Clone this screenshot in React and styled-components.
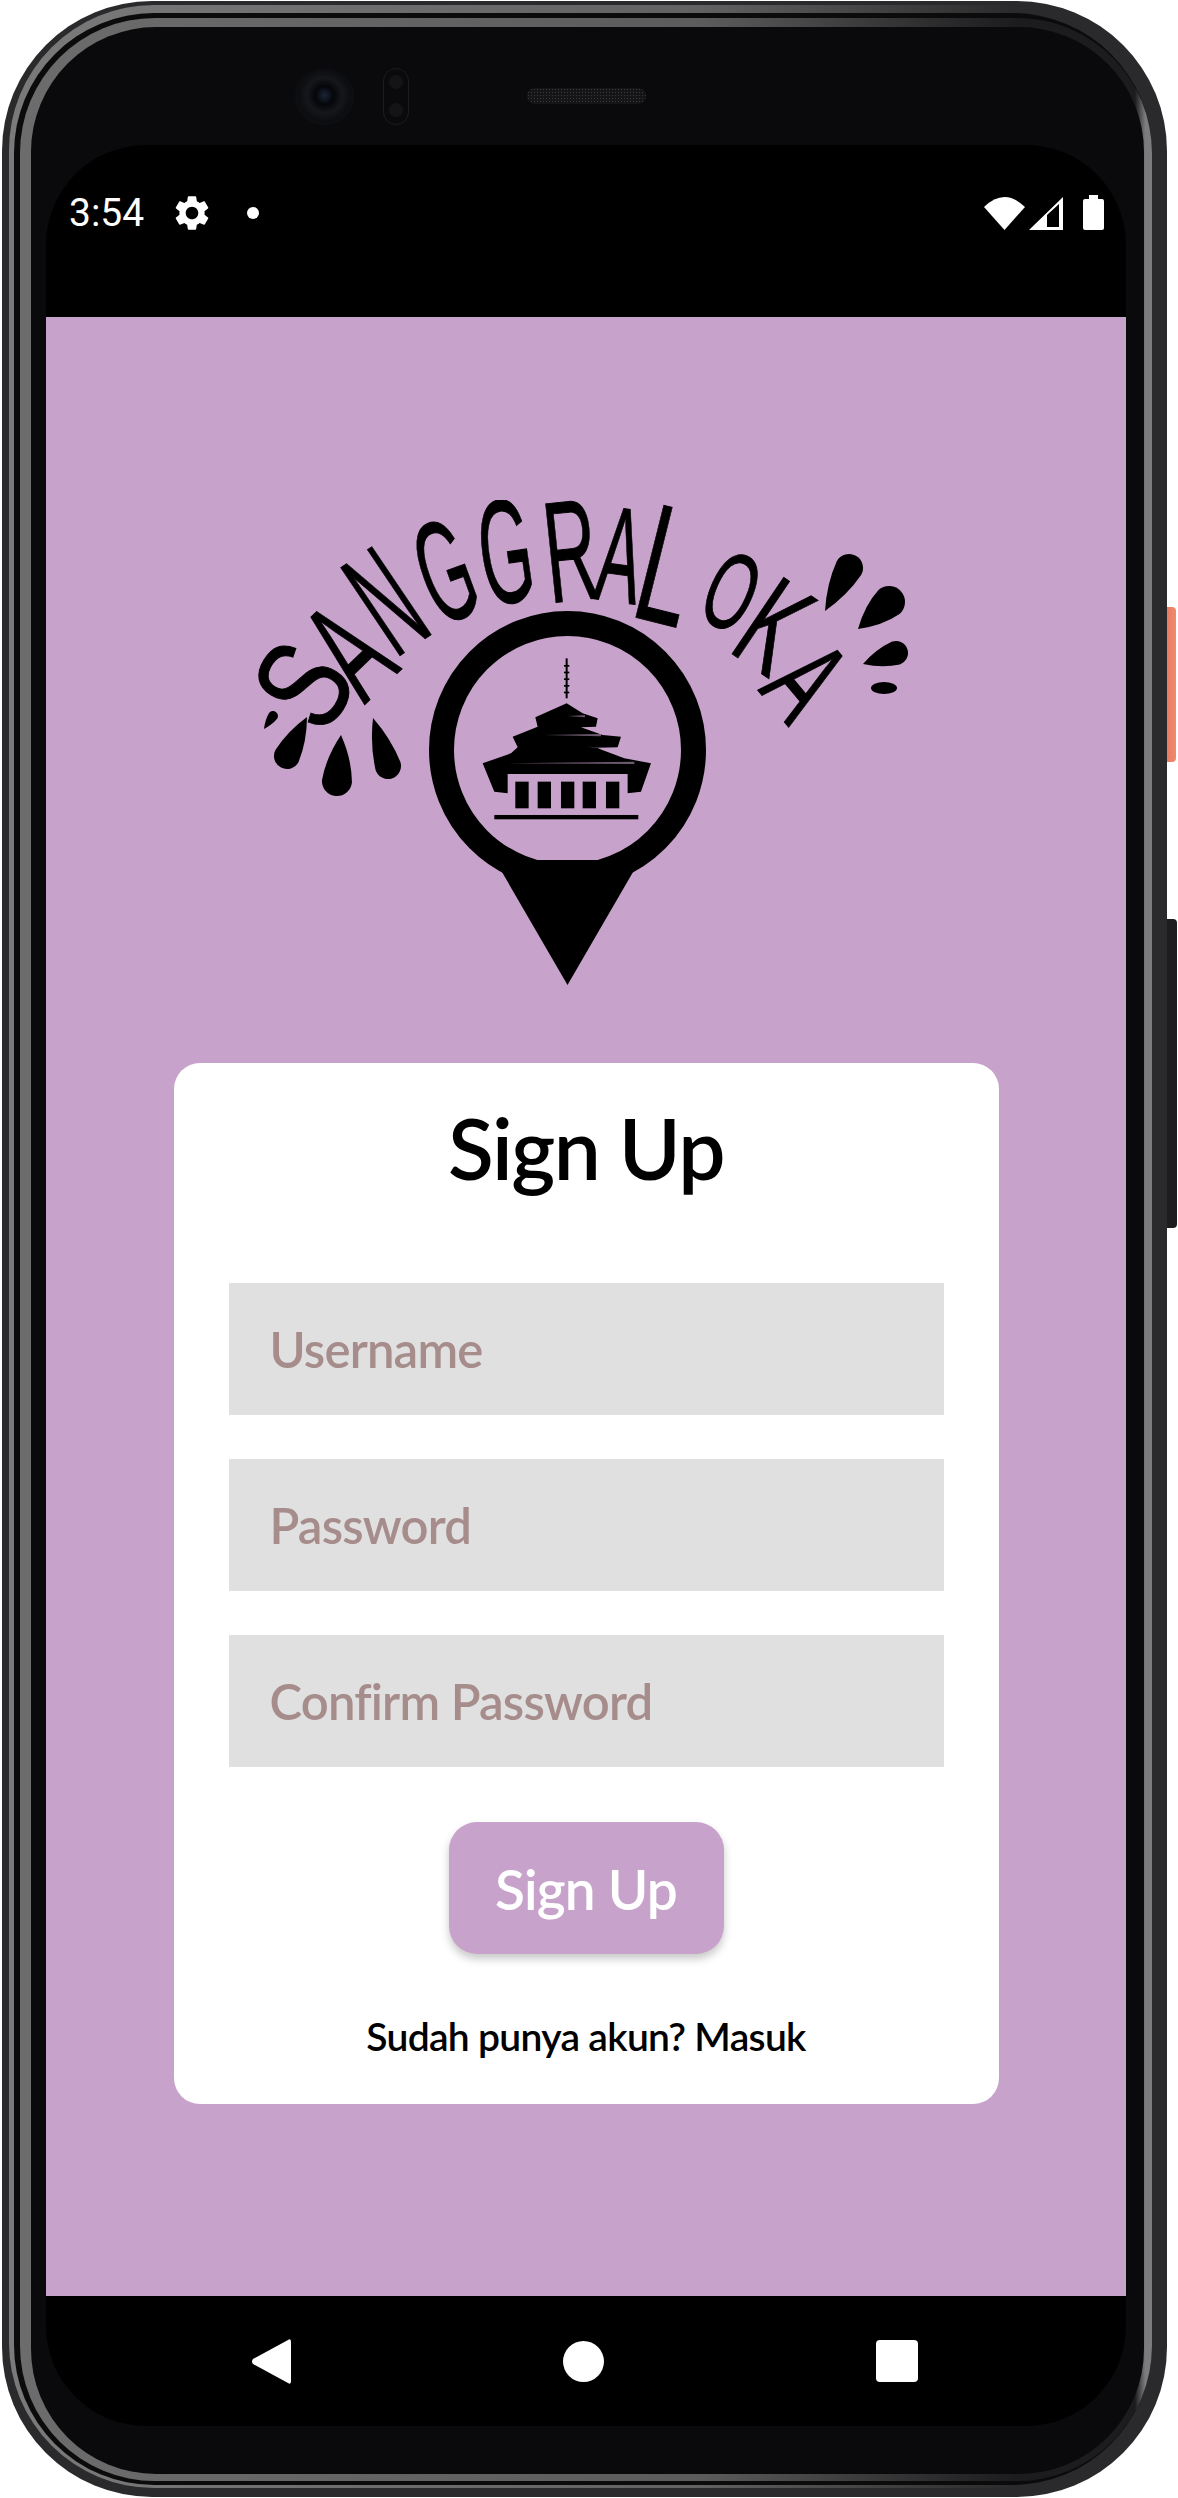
import React from 'react';
import styled, { createGlobalStyle } from 'styled-components';

const GlobalStyle = createGlobalStyle`
  html, body {
    margin: 0;
    padding: 0;
    background: #fff;
  }
  * {
    box-sizing: border-box;
  }
`;

const PURPLE = '#c7a2ca';
const FONT = 'Lato, "Open Sans", sans-serif';

// letters of the logo, placed one by one along the arc
const LOGO_LETTERS = [
  { ch: 'S', x: 304, y: 686, r: -58, sx: 0.76, size: 132 },
  { ch: 'A', x: 349, y: 652, r: -44, sx: 0.54, size: 146 },
  { ch: 'N', x: 386, y: 603, r: -34, sx: 0.44, size: 154 },
  { ch: 'G', x: 445, y: 573, r: -20, sx: 0.46, size: 144 },
  { ch: 'G', x: 505, y: 554, r: -8, sx: 0.46, size: 148 },
  { ch: 'R', x: 570, y: 553, r: -6, sx: 0.5, size: 144 },
  { ch: 'A', x: 619, y: 557, r: 8, sx: 0.48, size: 136 },
  { ch: 'L', x: 666, y: 568, r: 14, sx: 0.56, size: 168 },
  { ch: 'O', x: 730, y: 593, r: 24, sx: 0.56, size: 110 },
  { ch: 'K', x: 772, y: 628, r: 34, sx: 0.58, size: 134 },
  { ch: 'A', x: 804, y: 682, r: 50, sx: 0.58, size: 126 },
];

const DROPS = [
  [824, 611, 848, 568, 14],
  [857, 629, 888, 602, 16],
  [862, 664, 895, 653, 12],
  [263, 729, 272, 716, 5],
  [306, 717, 286, 756, 13],
  [340, 735, 336, 781, 15],
  [372, 718, 387, 766, 13],
];

const WINDOWS = [343, 410, 480, 545, 615];

const dropPath = (tx, ty, hx, hy, r) => {
  const len = Math.hypot(hx - tx, hy - ty);
  const nx = (-(hy - ty) / len) * r;
  const ny = ((hx - tx) / len) * r;
  const mx = tx + (hx - tx) * 0.5;
  const my = ty + (hy - ty) * 0.5;
  return `M${tx} ${ty} Q${mx + nx * 0.85} ${my + ny * 0.85} ${hx + nx} ${hy + ny} A${r} ${r} 0 1 0 ${hx - nx} ${hy - ny} Q${mx - nx * 0.85} ${my - ny * 0.85} ${tx} ${ty}Z`;
};

const Logo = () => (
  <LogoSvg viewBox="250 500 670 500" width="670" height="500">
    {LOGO_LETTERS.map((l, i) => (
      <g key={i} transform={`translate(${l.x} ${l.y}) rotate(${l.r}) scale(${l.sx} 1)`}>
        <LogoLetter fontSize={l.size} y={l.size * 0.33} textAnchor="middle">{l.ch}</LogoLetter>
      </g>
    ))}
    {DROPS.map((d, i) => <path key={i} d={dropPath(...d)} fill="#000" />)}
    <ellipse cx="883" cy="688" rx="13" ry="6" fill="#000" />

    <path d="M494 860 L566.5 985 L639 860Z" fill="#000" />
    <ellipse cx="566.5" cy="750" rx="126" ry="126.5" fill="none" stroke="#000" strokeWidth="25" />

    <g transform="translate(400 600) scale(.3333)">
      <rect x="494" y="175" width="6" height="120" fill="#000" />
      {[195, 215, 235, 255, 275].map(y => <rect key={y} x="489" y={y} width="16" height="5" fill="#000" />)}
      <path
        d="M497 310 L545 340 L590 355 L585 380 L540 382 L605 405 L660 410 L650 442 L590 445 L670 475 L750 490 L720 575 L680 580 L680 522 L320 522 L320 580 L280 575 L245 490 L330 460 L350 442 L335 410 L410 380 L403 352Z"
        fill="#000"
      />
      <path d="M500 348 L552 346 L552 352Z M430 405 L600 402 L600 409Z M555 440 L650 443 L650 448Z M300 490 L700 485 L700 492Z" fill={PURPLE} opacity=".55" />
      {WINDOWS.map(x => <rect key={x} x={x} y="545" width="40" height="80" fill="#000" />)}
      <rect x="280" y="645" width="432" height="13" fill="#000" />
    </g>
  </LogoSvg>
);

const App = () => (
  <Page>
    <GlobalStyle />
    <VolumeKey />
    <PowerKey />
    <Shell>
      <Trim>
        <Groove>
          <Edge>
            <Bezel>
              <TopBezel>
                <Camera />
                <Sensors>
                  <SensorDot />
                  <SensorDot />
                </Sensors>
                <Speaker />
              </TopBezel>
              <Display>
                <StatusBar>
                  <StatusLeft>
                    <Clock>3:54</Clock>
                    <svg width="42" height="42" viewBox="0 0 24 24" fill="#fff">
                      <path d="M19.14 12.94c.04-.3.06-.61.06-.94 0-.32-.02-.64-.07-.94l2.03-1.58c.18-.14.23-.41.12-.61l-1.92-3.32c-.12-.22-.37-.29-.59-.22l-2.39.96c-.5-.38-1.03-.7-1.62-.94l-.36-2.54c-.04-.24-.24-.41-.48-.41h-3.84c-.24 0-.43.17-.47.41l-.36 2.54c-.59.24-1.13.57-1.62.94l-2.39-.96c-.22-.08-.47 0-.59.22L2.74 8.87c-.12.21-.08.47.12.61l2.03 1.58c-.05.3-.09.63-.09.94s.02.64.07.94l-2.03 1.58c-.18.14-.23.41-.12.61l1.92 3.32c.12.22.37.29.59.22l2.39-.96c.5.38 1.03.7 1.62.94l.36 2.54c.05.24.24.41.48.41h3.84c.24 0 .44-.17.47-.41l.36-2.54c.59-.24 1.13-.56 1.62-.94l2.39.96c.22.08.47 0 .59-.22l1.92-3.32c.12-.22.07-.47-.12-.61l-2.01-1.58zM12 15.6c-1.98 0-3.6-1.62-3.6-3.6s1.62-3.6 3.6-3.6 3.6 1.62 3.6 3.6-1.62 3.6-3.6 3.6z" />
                    </svg>
                    <NotifyDot />
                  </StatusLeft>
                  <StatusRight>
                    <svg width="41" height="33" viewBox="0 0 41 33" fill="#fff">
                      <path d="M0 10 Q20.5 -10 41 10 L20.5 33Z" />
                    </svg>
                    <svg width="34" height="33" viewBox="0 0 34 33" fill="#fff">
                      <path fillRule="evenodd" d="M0 33 L34 0 V33Z M18 18 L30 7 V30 H18Z" />
                    </svg>
                    <BatteryIcon width="21" height="35" viewBox="0 0 21 35" fill="#fff">
                      <path d="M6 0 H15 V4 H19 Q21 4 21 6 V33 Q21 35 19 35 H2 Q0 35 0 33 V6 Q0 4 2 4 H6Z" />
                    </BatteryIcon>
                  </StatusRight>
                </StatusBar>

                <Content>
                  <Logo />
                  <Card>
                    <Heading>Sign Up</Heading>
                    <Fields>
                      <Field placeholder="Username" />
                      <Field placeholder="Password" type="password" />
                      <Field placeholder="Confirm Password" type="password" />
                    </Fields>
                    <SubmitButton>Sign Up</SubmitButton>
                    <SignInText>Sudah punya akun? Masuk</SignInText>
                  </Card>
                </Content>

                <NavBar>
                  <svg width="39" height="45" viewBox="0 0 39 45" fill="#fff">
                    <path d="M36 1 Q39 -1 39 3 V42 Q39 46 36 44 L1 25 Q-1 22.5 1 20Z" />
                  </svg>
                  <HomeKey />
                  <RecentKey />
                </NavBar>
              </Display>
            </Bezel>
          </Edge>
        </Groove>
      </Trim>
    </Shell>
  </Page>
);

const Page = styled.div`
  position: relative;
  width: 1178px;
  height: 2498px;
  padding: 1px 11px 1px 2px;
  overflow: hidden;
  background: #fff;
`;

const SideKey = styled.div`
  position: absolute;
  left: 1165px;
  border-radius: 0 4px 4px 0;
`;

const VolumeKey = styled(SideKey)`
  top: 607px;
  width: 11px;
  height: 155px;
  background: linear-gradient(90deg, #e8795c, #f08a70);
`;

const PowerKey = styled(SideKey)`
  top: 919px;
  width: 12px;
  height: 309px;
  background: #1d1d1f;
`;

const Shell = styled.div`
  position: relative;
  height: 100%;
  padding: 4px 15px 9px 7px;
  border-radius: 150px;
  background: #2a2a2c;
`;

const Trim = styled.div`
  height: 100%;
  padding: 8px 0 3px 5px;
  border-radius: 145px;
  background: linear-gradient(90deg, #7a7a7a, #626262 60%, #2a2a2c 88%, #2a2a2c);
`;

const Groove = styled.div`
  height: 100%;
  padding: 5px 0 4px 6px;
  border-radius: 140px;
  background: #0b0b0c;
`;

const Edge = styled.div`
  height: 100%;
  padding: 9px 8px 7px 11px;
  border-radius: 135px;
  background: linear-gradient(90deg, #6c6c6c, #5c5c5c 60%, #1c1c1e 88%, #1c1c1e 98.5%, #7c7c7c 99.4%);
`;

const Bezel = styled.div`
  display: flex;
  flex-direction: column;
  height: 100%;
  padding: 0 18px 48px 15px;
  border-radius: 125px;
  background: #0a0a0c;
`;

const TopBezel = styled.div`
  display: flex;
  flex: none;
  align-items: center;
  height: 118px;
  padding: 20px 0 0 249px;
`;

const Camera = styled.div`
  width: 59px;
  height: 57px;
  border-radius: 50%;
  background: radial-gradient(circle at 50% 48%, #1a2436 0, #05060a 22%, #16171b 42%, #0c0d10 62%, #141417 100%);
`;

const Sensors = styled.div`
  display: flex;
  flex-direction: column;
  align-items: center;
  justify-content: space-around;
  width: 26px;
  height: 57px;
  margin-left: 29px;
  border: 1px solid #1c1c20;
  border-radius: 13px;
`;

const SensorDot = styled.div`
  width: 14px;
  height: 14px;
  border-radius: 50%;
  background: #141417;
`;

const Speaker = styled.div`
  width: 119px;
  height: 16px;
  margin-left: 118px;
  border-radius: 8px;
  background: radial-gradient(circle, #3a3a3c 1px, #151517 1px) 0 0 / 3px 3px;
`;

const Display = styled.div`
  display: flex;
  flex: 1;
  flex-direction: column;
  overflow: hidden;
  border-radius: 100px;
  background: #000;
`;

const StatusBar = styled.div`
  display: flex;
  flex: none;
  justify-content: space-between;
  height: 172px;
  padding: 50px 22px 0 23px;
`;

const StatusLeft = styled.div`
  display: flex;
  align-items: center;
  height: 36px;
`;

const Clock = styled.span`
  width: 102px;
  color: #fff;
  font-family: Roboto, sans-serif;
  font-size: 39px;
  font-weight: 400;
  line-height: 36px;
`;

const NotifyDot = styled.div`
  width: 12px;
  height: 12px;
  margin-left: 34px;
  border-radius: 50%;
  background: #fff;
`;

const StatusRight = styled.div`
  display: flex;
  align-items: flex-end;
  gap: 4px;
  height: 35px;
`;

const BatteryIcon = styled.svg`
  margin-left: 16px;
`;

const Content = styled.div`
  display: flex;
  flex: 1;
  flex-direction: column;
  align-items: center;
  padding-top: 183px;
  background: ${PURPLE};
`;

const LogoSvg = styled.svg`
  display: block;
  flex: none;
`;

const LogoLetter = styled.text`
  font-family: "Liberation Sans", sans-serif;
  fill: #000;
  stroke: #000;
  stroke-width: 1px;
`;

const Card = styled.div`
  display: flex;
  flex-direction: column;
  align-items: center;
  width: 825px;
  height: 1041px;
  margin-top: 63px;
  padding: 0 55px;
  border-radius: 26px;
  background: #fff;
`;

const Heading = styled.h1`
  margin: 0;
  padding-top: 37px;
  color: #000;
  font-family: ${FONT};
  font-size: 84px;
  font-weight: 600;
  letter-spacing: -1.5px;
  line-height: 96px;
`;

const Fields = styled.div`
  display: flex;
  flex-direction: column;
  gap: 44px;
  width: 100%;
  margin-top: 87px;
`;

const Field = styled.input`
  display: block;
  width: 100%;
  height: 132px;
  padding: 0 41px;
  border: 0;
  border-radius: 0;
  outline: 0;
  background: #e0e0e0;
  font-family: ${FONT};
  font-size: 49px;
  font-weight: 600;
  letter-spacing: -0.8px;

  &::placeholder {
    color: #a78c8c;
    opacity: 1;
  }
`;

const SubmitButton = styled.button`
  width: 275px;
  height: 132px;
  margin-top: 55px;
  padding: 2px 0 0;
  border: 0;
  border-radius: 28px;
  background: ${PURPLE};
  box-shadow: 0 5px 9px rgba(0, 0, 0, 0.22);
  color: #fff;
  font-family: ${FONT};
  font-size: 55px;
  font-weight: 600;
  letter-spacing: -0.8px;
`;

const SignInText = styled.p`
  margin: 59px 0 0;
  color: #000;
  font-family: ${FONT};
  font-size: 39px;
  font-weight: 600;
  letter-spacing: -0.7px;
  line-height: 46px;
`;

const NavBar = styled.div`
  display: flex;
  flex: none;
  align-items: center;
  gap: 272px;
  height: 130px;
  padding-left: 206px;
`;

const HomeKey = styled.div`
  width: 41px;
  height: 41px;
  border-radius: 50%;
  background: #fff;
`;

const RecentKey = styled.div`
  width: 42px;
  height: 42px;
  border-radius: 4px;
  background: #fff;
`;

export default App;
